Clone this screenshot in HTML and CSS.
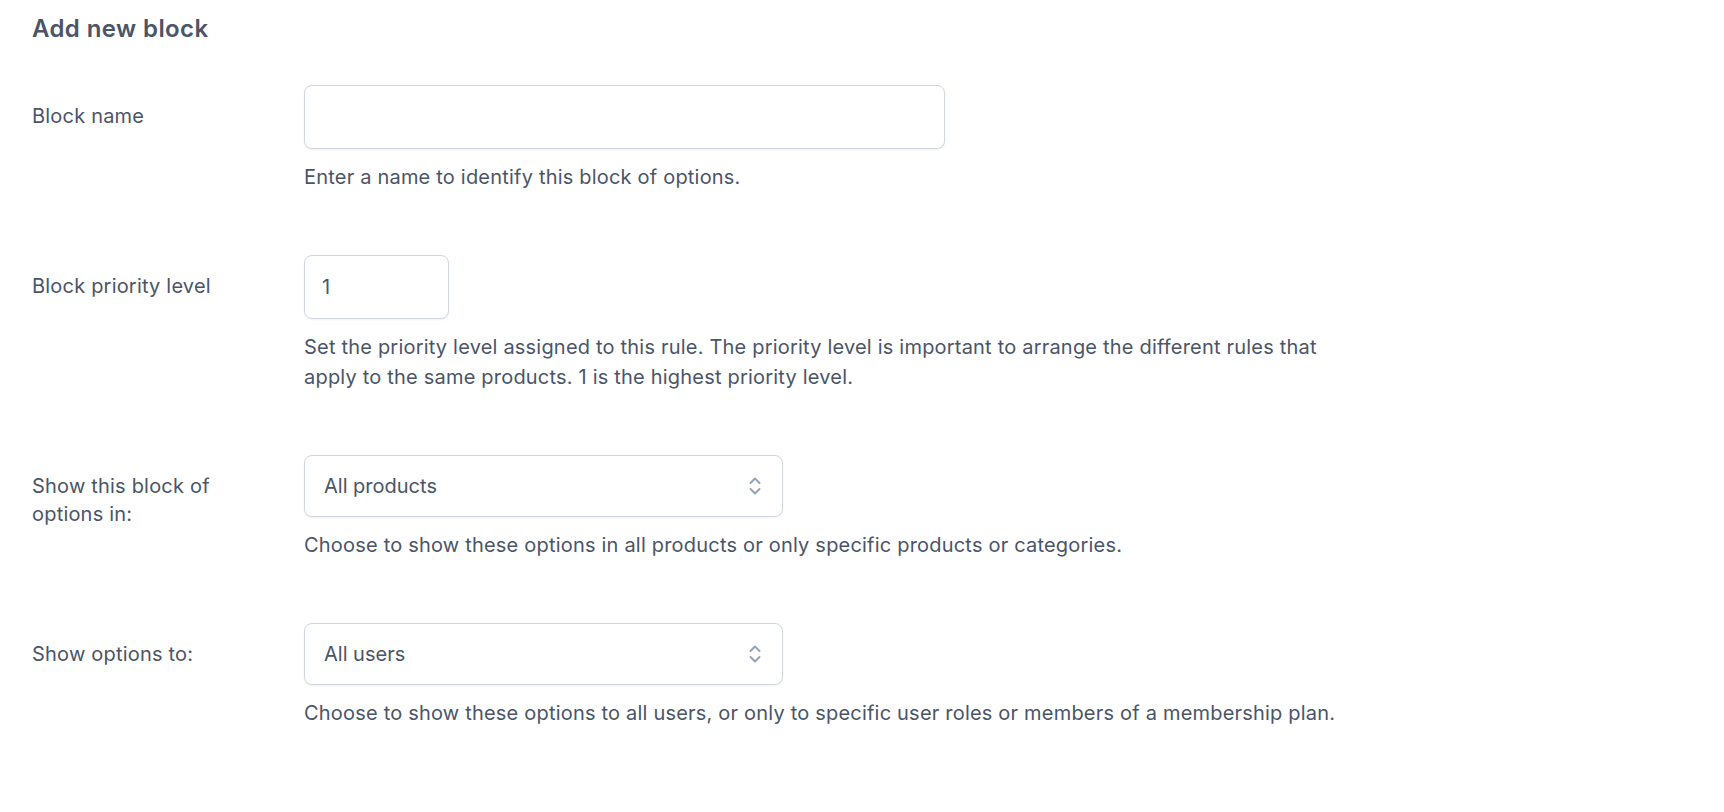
FILE: index.html
```html
<!DOCTYPE html>
<html lang="en">
<head>
  <meta charset="UTF-8"/>
  <meta name="viewport" content="width=device-width, initial-scale=1.0"/>
  <title>Add new block</title>
  <link rel="stylesheet" href="styles.css">
</head>
<body>
  <div class="page">
    <h2 class="title">Add new block</h2>

    <div class="form">
      <div class="row">
        <label class="label" for="blockName">Block name</label>
        <div class="field">
          <input class="input input-wide" id="blockName" type="text">
          <p class="desc">Enter a name to identify this block of options.</p>
        </div>
      </div>

      <div class="row">
        <label class="label" for="priority">Block priority level</label>
        <div class="field">
          <input class="input input-small" id="priority" type="text" value="1">
          <p class="desc">Set the priority level assigned to this rule. The priority level is important to arrange the different rules that apply to the same products. 1 is the highest priority level.</p>
        </div>
      </div>

      <div class="row">
        <label class="label" for="showIn">Show this block of options in:</label>
        <div class="field">
          <div class="select-wrap">
            <select class="select" id="showIn">
              <option>All products</option>
              <option>Specific products</option>
              <option>Specific categories</option>
            </select>
            <svg class="chevron" viewBox="0 0 14 24" width="14" height="24" fill="none" stroke="currentColor" stroke-width="2" stroke-linecap="round" stroke-linejoin="round">
              <path d="M2.5 9L7 4.5L11.5 9"/>
              <path d="M2.5 15L7 19.5L11.5 15"/>
            </svg>
          </div>
          <p class="desc">Choose to show these options in all products or only specific products or categories.</p>
        </div>
      </div>

      <div class="row">
        <label class="label" for="showTo">Show options to:</label>
        <div class="field">
          <div class="select-wrap">
            <select class="select" id="showTo">
              <option>All users</option>
              <option>Specific user roles</option>
              <option>Membership plan members</option>
            </select>
            <svg class="chevron" viewBox="0 0 14 24" width="14" height="24" fill="none" stroke="currentColor" stroke-width="2" stroke-linecap="round" stroke-linejoin="round">
              <path d="M2.5 9L7 4.5L11.5 9"/>
              <path d="M2.5 15L7 19.5L11.5 15"/>
            </svg>
          </div>
          <p class="desc">Choose to show these options to all users, or only to specific user roles or members of a membership plan.</p>
        </div>
      </div>
    </div>
  </div>
</body>
</html>
```

FILE: styles.css
```css
body {
  margin: 0;
  background: #fff;
  color: #4a5568;
  font-family: Inter, "Noto Sans", sans-serif;
  font-size: 20px;
  letter-spacing: 0.2px;
}

.page {
  padding: 13px 32px 40px;
}

.title {
  margin: 0;
  font-size: 24px;
  line-height: 32px;
  font-weight: 600;
  letter-spacing: 0.4px;
  color: #4a5568;
}

.form {
  display: flex;
  flex-direction: column;
  gap: 63px;
  margin-top: 40px;
}

.row {
  display: grid;
  grid-template-columns: 272px 1fr;
}

.label {
  padding-top: 17px;
  padding-right: 60px;
  line-height: 28px;
}

.field {
  display: flex;
  flex-direction: column;
  align-items: flex-start;
}

.input {
  box-sizing: border-box;
  height: 64px;
  padding: 0 17px;
  border: 1px solid #cfd6e2;
  border-radius: 8px;
  background: #fff;
  box-shadow: 0 1px 2px rgba(30, 41, 59, 0.06);
  font: inherit;
  color: #4a5568;
  outline: none;
}

.input-wide {
  width: 641px;
}

.input-small {
  width: 145px;
}

.select-wrap {
  position: relative;
  width: 479px;
}

.select {
  appearance: none;
  -webkit-appearance: none;
  box-sizing: border-box;
  width: 100%;
  height: 62px;
  padding: 0 50px 0 19px;
  border: 1px solid #cfd6e2;
  border-radius: 8px;
  background: #fff;
  box-shadow: 0 1px 2px rgba(30, 41, 59, 0.06);
  font: inherit;
  color: #4a5568;
  outline: none;
}

.chevron {
  position: absolute;
  right: 21px;
  top: 19px;
  color: #94a3b8;
  pointer-events: none;
}

.desc {
  margin: 13px 0 0;
  max-width: 1045px;
  line-height: 30px;
}
```
